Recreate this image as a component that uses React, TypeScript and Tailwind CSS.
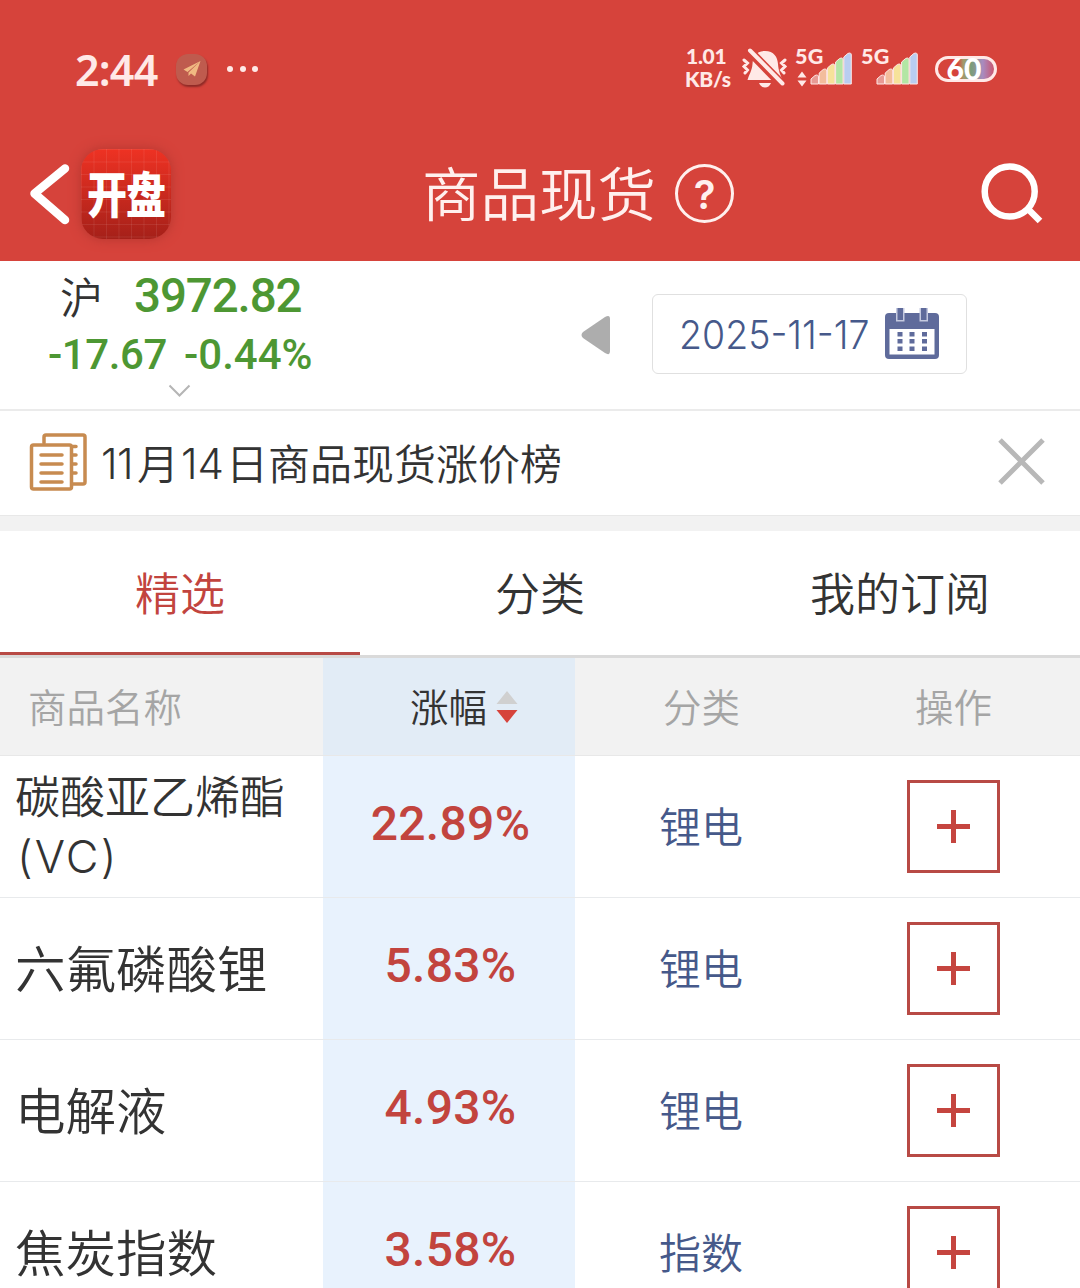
import { clsx } from "clsx"

interface Commodity {
  name: string
  suffix?: string
  change: string
  category: string
}

const COMMODITIES: Commodity[] = [
  { name: "碳酸亚乙烯酯", suffix: "(VC)", change: "22.89%", category: "锂电" },
  { name: "六氟磷酸锂", change: "5.83%", category: "锂电" },
  { name: "电解液", change: "4.93%", category: "锂电" },
  { name: "焦炭指数", change: "3.58%", category: "指数" },
]

const TABS = ["精选", "分类", "我的订阅"]

const SIGNAL_BARS = [
  { x: 1, h: 8, color: "#e89a94" },
  { x: 9.2, h: 14, color: "#f3bd9c" },
  { x: 17.4, h: 19, color: "#f6e29a" },
  { x: 25.6, h: 25, color: "#b3e6a4" },
  { x: 33.8, h: 30, color: "#b9cdf0" },
]

function Signal({ withArrows = false }: { withArrows?: boolean }) {
  return (
    <div className="flex h-[40px] w-[59px] items-end">
      <div className="flex h-[40px] w-[28px] shrink-0 flex-col">
        <span className="-mt-[1px] font-['Lato',sans-serif] text-[21.500px] leading-[17px] font-black tracking-[0.300px]">5G</span>
        {withArrows && (
          <svg width="12" height="16" viewBox="0 0 12 16" className="mt-[6px] ml-[1px]" fill="#ffe9e7">
            <path d="M6 0.500 10.500 6.500H1.500zM6 15.500 10.500 9.500H1.500z" />
          </svg>
        )}
      </div>
      <svg width="44" height="34" viewBox="0 0 44 34" className="mb-[4px] -ml-[13px] shrink-0">
        {SIGNAL_BARS.map((bar) => (
          <path
            key={bar.x}
            d={`M${bar.x} 33V${36 - bar.h}L${bar.x + 4} ${32.5 - bar.h}Q${bar.x + 7.5} ${31 - bar.h} ${bar.x + 7.5} ${34 - bar.h}V33Z`}
            fill={bar.color}
            stroke="#ffe9e7"
            strokeWidth="1"
            strokeLinejoin="round"
          />
        ))}
      </svg>
    </div>
  )
}

function MutedBell() {
  return (
    <svg width="48" height="42" viewBox="0 0 48 42" fill="none">
      <path d="M24 3C15 3 12 9 11.500 16 11 23 8 26 6.500 32H41.500C39 26 37.500 23 37 16 36.500 9 33 3 24 3Z" fill="#ffe9e7" />
      <path d="M18 35H30Q28 39.500 24 39.500T18 35Z" fill="#ffe9e7" />
      <path d="M6 0.500 41 36.500" stroke="#d6433b" strokeWidth="9" />
      <path d="M9 2.500 41.500 35.500" stroke="#ffe9e7" strokeWidth="4" strokeLinecap="round" />
      <path d="M3 12 6.500 15 3 18.500 6.500 22 4 25M44 12 40.500 15 44 18.500 40.500 22 43 25" stroke="#ffe9e7" strokeWidth="3" strokeLinecap="round" />
    </svg>
  )
}

function StatusBar() {
  return (
    <div className="flex h-[126px] items-center pt-[12px] pr-[83px] pl-[75px] text-[#ffe9e7]">
      <span className="w-[101px] font-['Noto_Sans',sans-serif] text-[43px] leading-none font-semibold tracking-[-0.800px]">2:44</span>
      <div className="flex size-[31px] items-center justify-center rounded-[12px] bg-[#bf5b4e] shadow-[1px_2px_2px_#8e2a26]">
        <svg width="18" height="18" viewBox="0 0 18 18" fill="#f0b982">
          <path d="M17.500 1 0.500 9.500 4.500 12ZM17.500 1 5.500 12.500V16L8 13.500 12 16.500Z" />
        </svg>
      </div>
      <div className="ml-[20px] flex gap-[6.500px]">
        <i className="size-[6px] rounded-full bg-[#ffe9e7]" />
        <i className="size-[6px] rounded-full bg-[#ffe9e7]" />
        <i className="size-[6px] rounded-full bg-[#ffe9e7]" />
      </div>

      <div className="ml-auto flex h-[40px] items-center">
        <div className="w-[56px] pb-[4px] font-['Lato',sans-serif] text-[21px] leading-[23.500px] font-black tracking-[-0.300px]">
          <div className="pl-[1px]">1.01</div>
          <div>KB/s</div>
        </div>
        <MutedBell />
        <div className="ml-[6px] flex gap-[7px]">
          <Signal withArrows />
          <Signal />
        </div>
        <div className="ml-[15px] flex h-[26px] w-[62px] items-center justify-center rounded-full border-[3px] border-[#ffe9e7] bg-[linear-gradient(90deg,#d6433b_35%,#a39a6c_45%,#7b9d7c_60%,#a98bc0_80%,#c9566f)] pr-[4px] pb-[2px] font-['Lato',sans-serif] text-[30px] leading-none font-black text-white">
          <span>60</span>
        </div>
      </div>
    </div>
  )
}

function NavBar() {
  return (
    <div className="flex h-[135px] items-center">
      <svg width="50" height="64" viewBox="0 0 50 64" fill="none" className="ml-[25px]">
        <path d="M40 6.500 9.500 31.500 40 58" stroke="#fff" strokeWidth="8.500" strokeLinecap="round" strokeLinejoin="round" />
      </svg>
      <div className="ml-[6px] flex size-[90px] items-center justify-center rounded-[22px] bg-[linear-gradient(#ffffff14_1px,transparent_1px),linear-gradient(90deg,#ffffff14_1px,transparent_1px),linear-gradient(#ee3223,#a52019)] bg-[length:100%_12.500px,12.500px_100%,100%_100%] pb-[3px] shadow-[0_0_12px_#b4362f]">
        <span className="scale-y-[1.22] text-[40px] leading-none font-black tracking-[-1px] whitespace-nowrap text-white">开盘</span>
      </div>
      <h1 className="ml-[251px] w-[253px] pb-[5px] text-[58.500px] leading-none font-[350] text-[#fff0ee]">商品现货</h1>
      <div className="flex size-[59px] items-center justify-center rounded-full border-[3.500px] border-[#fff0ee] pt-[2px] font-['Inter',sans-serif] text-[40px] leading-none font-semibold text-[#fff0ee]">
        ?
      </div>
      <svg width="64" height="64" viewBox="0 0 64 64" fill="none" className="mr-[36px] ml-auto" stroke="#fff">
        <circle cx="29.700" cy="29.500" r="25" strokeWidth="6.500" />
        <path d="M47 46 60 59" strokeWidth="6.500" />
      </svg>
    </div>
  )
}

function CalendarIcon() {
  return (
    <svg width="54" height="51" viewBox="0 0 54 51" fill="#5f6b9b">
      <path d="M4 5H50Q54 5 54 9V47Q54 51 50 51H4Q0 51 0 47V9Q0 5 4 5Z" />
      <path d="M4.500 21H49.500V46.500H4.500Z" fill="#fff" />
      <path d="M11 0H19.500V13.500H11ZM34.500 0H43V13.500H34.500Z" fill="#c5cae0" />
      <path d="M12.500 0H18V12H12.500ZM36 0H41.500V12H36Z" />
      {[24, 31, 38.5].map((y) => [12.5, 24.5, 37].map((x) => <rect key={`${x}-${y}`} x={x} y={y} width="5" height="4.500" />))}
    </svg>
  )
}

function MarketBar() {
  return (
    <div className="flex h-[150px] items-center border-b-2 border-[#ebebeb]">
      <div className="flex h-full w-[360px] flex-col items-center font-['Roboto',sans-serif] font-medium text-[#4d9733]">
        <div className="flex h-[69px] w-full items-center pt-[3px] pl-[60px]">
          <span className="w-[74px] pb-[3px] font-['Noto_Sans_CJK_SC',sans-serif] text-[43px] leading-none font-[350] text-[#333]">沪</span>
          <span className="text-[47.500px] leading-none tracking-[-1.100px]">3972.82</span>
        </div>
        <div className="flex h-[49px] w-full items-center pt-[1px] pl-[48px] text-[42px] leading-none">
          <span className="w-[136px] tracking-[-0.400px]">-17.67</span>
          <span>-0.44%</span>
        </div>
        <svg width="24" height="14" viewBox="0 0 24 14" fill="none" className="mt-[5px]">
          <path d="M1.500 1.500 11.500 11.500 21.500 1.500" stroke="#b5b5b5" strokeWidth="2" />
        </svg>
      </div>
      <svg width="30" height="40" viewBox="0 0 30 40" fill="#adadad" className="ml-[221px]">
        <path d="M24 2 2 17Q-1 20 2 23L24 38Q29 41 29 36V4Q29 -1 24 2Z" />
      </svg>
      <div className="mb-[2px] ml-[41px] flex h-[80px] w-[315px] items-center rounded-[6px] border border-[#e0e0e0] pl-[26px]">
        <span className="w-[206px] origin-left scale-x-[0.937] pt-[2px] font-['Inter',sans-serif] text-[40px] leading-none font-light whitespace-nowrap text-[#46598a]">
          2025-11-17
        </span>
        <div className="pb-[2px]">
          <CalendarIcon />
        </div>
      </div>
    </div>
  )
}

function NoticeBar() {
  return (
    <div className="flex h-[105px] items-center border-b border-[#e8e8e8] pb-[2px]">
      <svg width="60" height="60" viewBox="0 0 60 60" fill="none" stroke="#c78b50" strokeWidth="3.500" strokeLinecap="round" className="ml-[29px]">
        <path d="M15 11V5Q15 3 17 3H54Q56 3 56 5V50Q56 52 54 52H44" />
        <rect x="2.500" y="13" width="40" height="44" rx="2" />
        <path d="M12 23H33M12 32H33M12 41H33M12 50H33M44 14.500H47M44 23H47M44 32H47M44 41H47" />
      </svg>
      <p className="ml-[12px] flex items-center text-[42px] leading-none font-[350] whitespace-nowrap text-[#333]">
        <span className="w-[36px] pt-[3px] font-['Inter',sans-serif] font-light tracking-[-0.500px]">11</span>
        月
        <span className="ml-[2px] w-[45px] pt-[3px] font-['Inter',sans-serif] font-light">14</span>
        日商品现货涨价榜
      </p>
      <svg width="50" height="50" viewBox="0 0 50 50" className="mr-[33px] ml-auto">
        <path d="M3 3 46 46M46 3 3 46" stroke="#b8b8b8" strokeWidth="5" />
      </svg>
    </div>
  )
}

function CommodityTable() {
  return (
    <div>
      <div className="grid h-[98px] grid-cols-[323px_252px_252px_253px] border-b border-[#e8e8e8] bg-[#f2f2f2] text-[38.500px] leading-none font-[350] text-[#a5a5a5]">
        <div className="flex items-center pb-[2px] pl-[28px]">商品名称</div>
        <div className="flex items-center bg-[#e2ecf6] pl-[87px] text-[#333]">
          <span className="pb-[2px]">涨幅</span>
          <svg width="22" height="32" viewBox="0 0 22 32" className="ml-[9px]">
            <path d="M11 0 21.500 13H0.500Z" fill="#d0d0d0" />
            <path d="M11 32 21.500 19H0.500Z" fill="#d6433b" />
          </svg>
        </div>
        <div className="flex items-center justify-center pb-[2px] pl-[1px]">分类</div>
        <div className="flex items-center justify-center pb-[2px]">操作</div>
      </div>
      {COMMODITIES.map((item) => (
        <div key={item.name} className="grid h-[142px] grid-cols-[323px_252px_252px_253px] border-b border-[#e8eaec]">
          <div
            className={clsx("flex flex-col justify-center pb-[4px] pl-[15px] font-[350] text-[#333]", {
              "text-[45px] leading-[60px]": item.suffix,
              "text-[50.500px] leading-none": !item.suffix,
            })}
          >
            <span>{item.name}</span>
            {item.suffix && (
              <span className="-mb-[2px] pt-[2px] pl-[2px] font-['Inter',sans-serif] font-light tracking-[2.200px]">{item.suffix}</span>
            )}
          </div>
          <div className="flex items-center justify-center bg-[#e8f2fd] pb-[6px] pl-[3px] font-['Roboto',sans-serif] text-[48px] leading-none font-medium tracking-[0.300px] text-[#c2443e]">
            {item.change}
          </div>
          <div className="flex items-center justify-center pb-[4px] text-[42px] leading-none font-[350] text-[#46598a]">{item.category}</div>
          <div className="flex items-center justify-center">
            <button className="flex size-[93px] items-center justify-center border-[3px] border-[#b84a45]">
              <svg width="33" height="33" viewBox="0 0 33 33">
                <path d="M16.500 0V33M0 16.500H33" stroke="#c5453f" strokeWidth="5" />
              </svg>
            </button>
          </div>
        </div>
      ))}
    </div>
  )
}

export default function App() {
  return (
    <div className="h-[1288px] w-[1080px] overflow-hidden bg-white font-['Noto_Sans_CJK_SC',sans-serif]">
      <header className="h-[261px] bg-[#d6433b]">
        <StatusBar />
        <NavBar />
      </header>
      <MarketBar />
      <NoticeBar />
      <div className="h-[15px] bg-[#f2f2f2]" />

      {/* Tabs */}
      <nav className="grid h-[127px] grid-cols-3 border-b-[3px] border-[#dadada] text-[45px] leading-none font-[350] text-[#333]">
        {TABS.map((tab, i) => (
          <div
            key={tab}
            className={clsx("flex items-center justify-center border-b-[3px]", {
              "border-[#b84a45] text-[#c2443e]": i === 0,
              "border-transparent": i !== 0,
            })}
          >
            {tab}
          </div>
        ))}
      </nav>

      <CommodityTable />
    </div>
  )
}
